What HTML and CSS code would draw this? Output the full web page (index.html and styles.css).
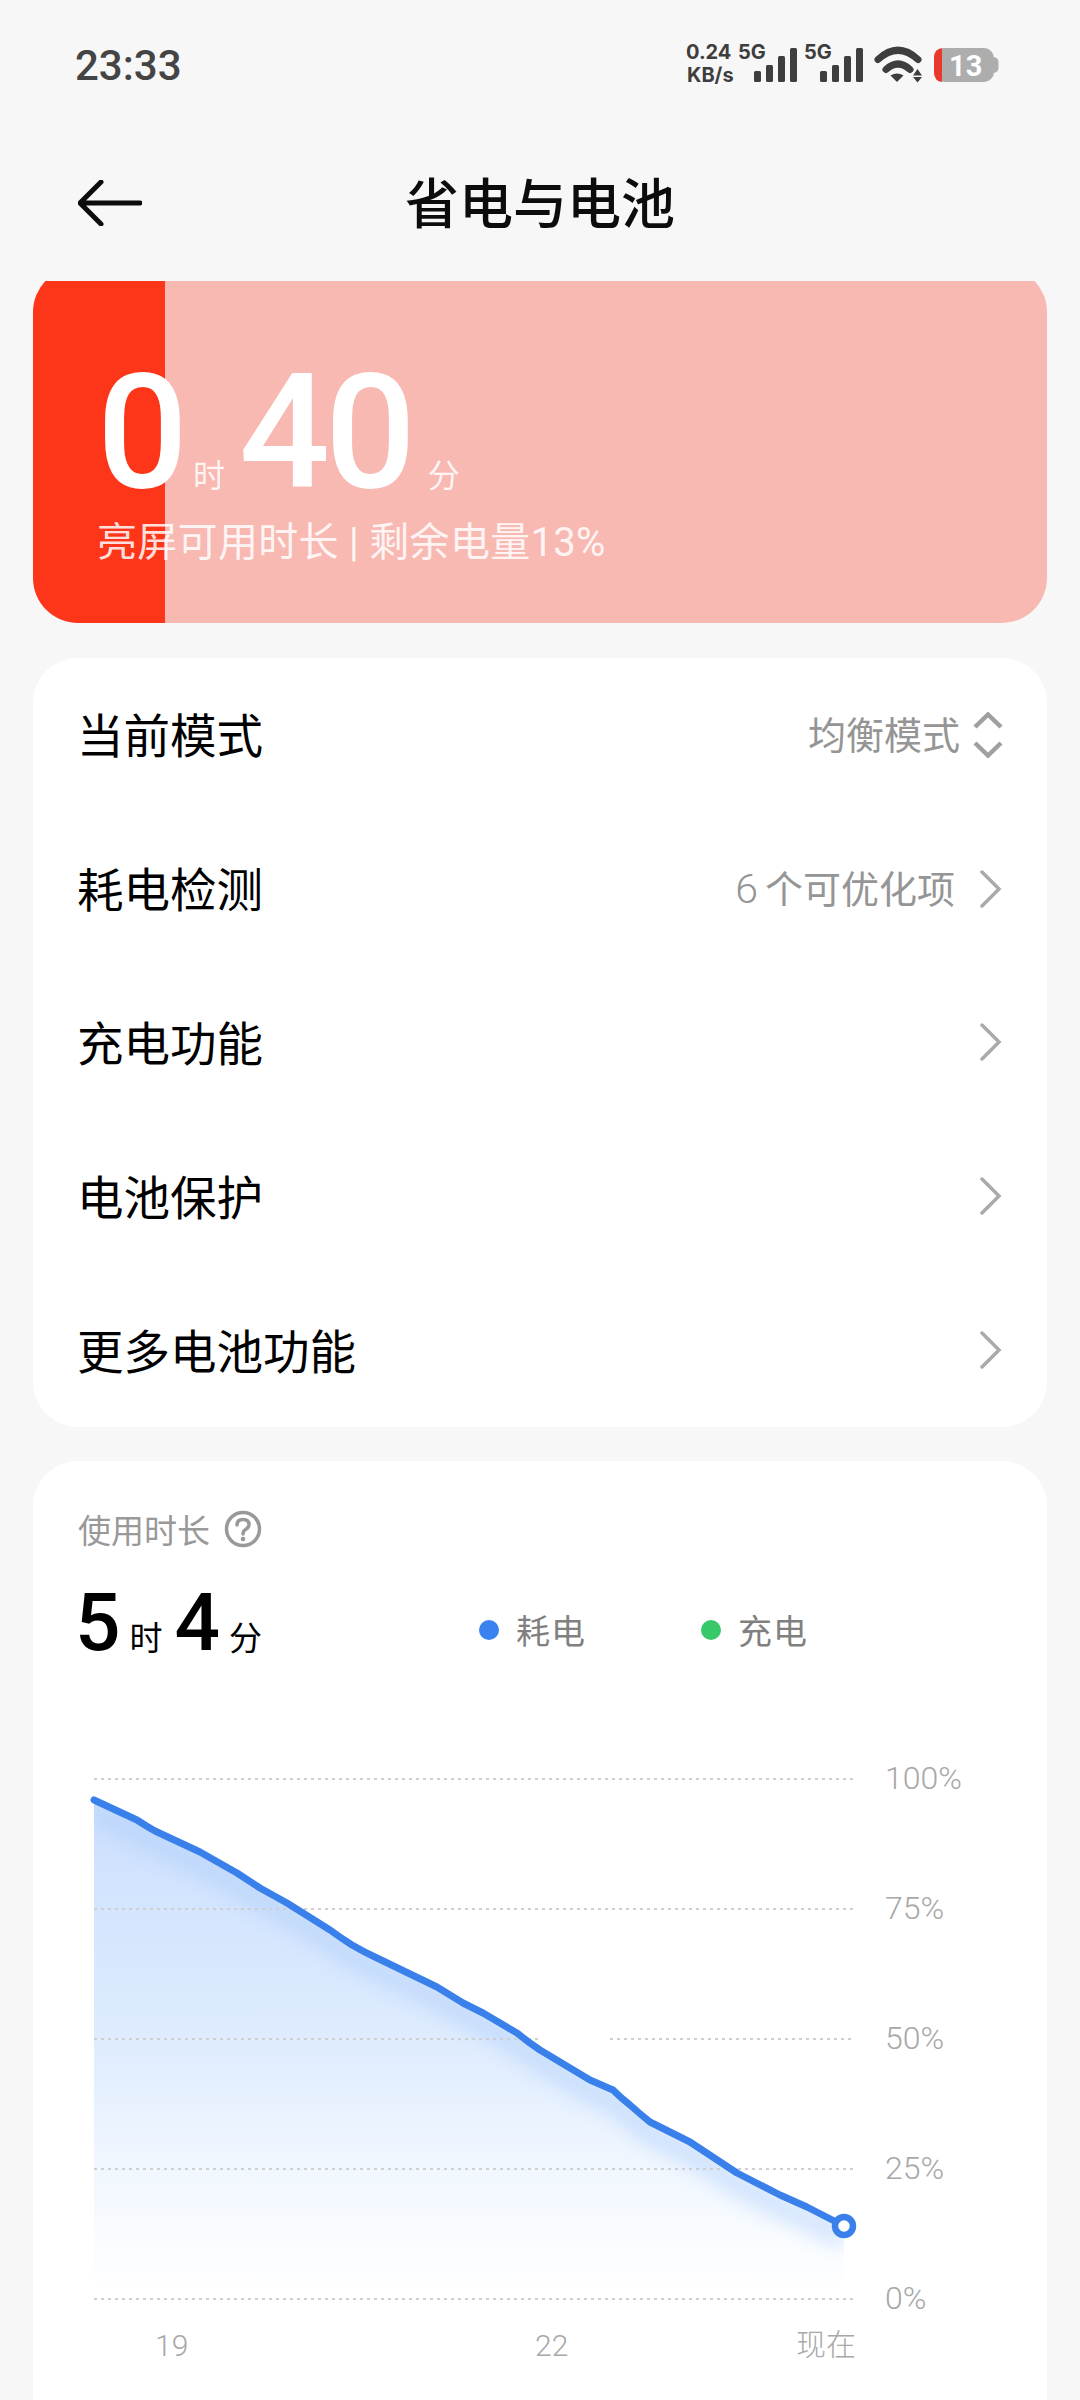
FILE: index.html
```html
<!DOCTYPE html>
<html lang="zh-CN">
<head>
<meta charset="utf-8">
<title>省电与电池</title>
<link rel="stylesheet" href="styles.css">
</head>
<body>
<div class="page">
  <header class="status-bar">
    <span class="clock">23:33</span>
    <svg class="status-icons" viewBox="680 40 320 50" width="320" height="50" aria-label="状态">
      <text class="net-speed" x="686" y="59">0.24</text>
      <text class="net-speed" x="687" y="82">KB/s</text>
      <text class="net-type" x="738" y="59">5G</text>
      <g class="ink">
        <rect x="754" y="71" width="7" height="11" rx="1.5"/>
        <rect x="766" y="65" width="7" height="17" rx="1.5"/>
        <rect x="778" y="56" width="7" height="26" rx="1.5"/>
        <rect x="790" y="48" width="7" height="34" rx="1.5"/>
      </g>
      <text class="net-type" x="804" y="59">5G</text>
      <g class="ink">
        <rect x="820" y="71" width="7" height="11" rx="1.5"/>
        <rect x="832" y="65" width="7" height="17" rx="1.5"/>
        <rect x="844" y="56" width="7" height="26" rx="1.5"/>
        <rect x="856" y="48" width="7" height="34" rx="1.5"/>
      </g>
      <path class="wifi-arc" d="M878 59.500Q898 41 918 59.500"/>
      <path class="wifi-arc" d="M886 69.500Q898 58.500 910 69.500"/>
      <path class="ink" d="M890.500 75.500Q897 71.500 903.500 75.500L897 82Z"/>
      <path class="ink" d="M913 75.500L917.500 69L922 75.500ZM913 77L922 77L917.500 82.500Z"/>
      <rect class="batt-body" x="934" y="48" width="60" height="34" rx="10"/>
      <path class="batt-low" d="M942 48V82H943.500Q934 82 934 72V58Q934 48 943.500 48Z"/>
      <path class="batt-body" d="M994 57Q998.500 58 998.500 62V68Q998.500 72 994 73Z"/>
      <text class="batt-text" x="949" y="76">13</text>
    </svg>
  </header>

  <nav class="nav-bar">
    <svg class="back-icon" viewBox="0 0 64 46" width="64" height="46" aria-hidden="true">
      <path d="M23 2L2 23L23 44M3 23H62"/>
    </svg>
    <h1 class="nav-title">省电与电池</h1>
  </nav>

  <div class="hero-clip">
    <section class="hero">
      <div class="hero-time">
        <span class="hero-num">0</span><span class="hero-unit unit-hour">时</span>
        <span class="hero-num">40</span><span class="hero-unit unit-min">分</span>
      </div>
      <p class="hero-caption">亮屏可用时长 | 剩余电量13%</p>
    </section>
  </div>

  <section class="card menu">
    <div class="menu-row">
      <span class="menu-label">当前模式</span>
      <span class="menu-value">均衡模式</span>
      <svg class="updown" viewBox="0 0 30 46" width="30" height="46" aria-hidden="true">
        <path d="M2 15L15 2.500L28 15M2 31L15 43.500L28 31"/>
      </svg>
    </div>
    <div class="menu-row">
      <span class="menu-label">耗电检测</span>
      <span class="menu-value"><span class="menu-digit">6</span>个可优化项</span>
      <svg class="chevron" viewBox="0 0 22 38" width="22" height="38" aria-hidden="true">
        <path d="M2 2L19 19L2 36"/>
      </svg>
    </div>
    <div class="menu-row">
      <span class="menu-label">充电功能</span>
      <svg class="chevron" viewBox="0 0 22 38" width="22" height="38" aria-hidden="true">
        <path d="M2 2L19 19L2 36"/>
      </svg>
    </div>
    <div class="menu-row">
      <span class="menu-label">电池保护</span>
      <svg class="chevron" viewBox="0 0 22 38" width="22" height="38" aria-hidden="true">
        <path d="M2 2L19 19L2 36"/>
      </svg>
    </div>
    <div class="menu-row">
      <span class="menu-label">更多电池功能</span>
      <svg class="chevron" viewBox="0 0 22 38" width="22" height="38" aria-hidden="true">
        <path d="M2 2L19 19L2 36"/>
      </svg>
    </div>
  </section>

  <section class="card usage">
    <div class="usage-head">
      <div class="usage-title">
        <span>使用时长</span>
        <svg class="help-icon" viewBox="0 0 38 38" width="38" height="38" aria-hidden="true">
          <circle cx="19" cy="19" r="16.500"/>
          <path d="M13 15Q13 9.500 19 9.500Q25 9.500 25 14.500Q25 17.500 21.500 19.500Q19 21 19 24"/>
          <circle class="help-dot" cx="19" cy="29" r="2.300"/>
        </svg>
      </div>
      <div class="usage-summary">
        <div class="duration">
          <span class="duration-num">5</span><span class="duration-unit">时</span>
          <span class="duration-num">4</span><span class="duration-unit">分</span>
        </div>
        <div class="legend">
          <span class="legend-item"><i class="dot dot-blue"></i>耗电</span>
          <span class="legend-item"><i class="dot dot-green"></i>充电</span>
        </div>
      </div>
    </div>

    <svg class="chart" viewBox="33 1740 1014 660" width="1014" height="660">
      <defs>
        <linearGradient id="areaFill" gradientUnits="userSpaceOnUse" x1="0" y1="1800" x2="0" y2="2292">
          <stop offset="0" stop-color="#cbdffd"/>
          <stop offset="0.5" stop-color="#dfecfe"/>
          <stop offset="0.75" stop-color="#f1f7ff"/>
          <stop offset="1" stop-color="#ffffff"/>
        </linearGradient>
        <clipPath id="areaClip">
          <path d="M94 1800L137 1820L155 1831L200 1852L237 1873L260 1888L287 1903L330 1930L352 1945L377 1958L437 1987L463 2003L483 2013L517 2033L540 2050L590 2080L613 2090L630 2105L650 2122L690 2142L737 2173L780 2195L807 2207L844 2226V2300H94Z"/>
        </clipPath>
        <filter id="soften" x="-10%" y="-10%" width="120%" height="120%">
          <feGaussianBlur stdDeviation="9"/>
        </filter>
      </defs>

      <g clip-path="url(#areaClip)">
        <rect x="94" y="1780" width="750" height="520" fill="url(#areaFill)"/>
        <path class="line-glow" filter="url(#soften)" d="M94 1812L137 1832L155 1843L200 1864L237 1885L260 1900L287 1915L330 1942L352 1957L377 1970L437 1999L463 2015L483 2025L517 2045L540 2062L590 2092L613 2102L630 2117L650 2134L690 2154L737 2185L780 2207L807 2219L844 2238"/>
      </g>

      <g class="grid">
        <path d="M94 1779H853"/>
        <path d="M94 1909H853"/>
        <path d="M94 2039H540M610 2039H853"/>
        <path d="M94 2169H853"/>
        <path d="M94 2299H853"/>
      </g>

      <path class="line" d="M94 1800L137 1820Q146 1826 155 1831L200 1852L237 1873L260 1888L287 1903L330 1930Q341 1938 352 1945Q364 1952 377 1958L437 1987L463 2003L483 2013L517 2033Q528 2042 540 2050L590 2080L613 2090Q621 2098 630 2105Q640 2114 650 2122L690 2142L737 2173L780 2195L807 2207L844 2226"/>
      <circle class="line-end" cx="844" cy="2226" r="9"/>

      <g class="axis-y">
        <text x="885" y="1789">100%</text>
        <text x="885" y="1919">75%</text>
        <text x="885" y="2049">50%</text>
        <text x="885" y="2179">25%</text>
        <text x="885" y="2309">0%</text>
      </g>
      <g class="axis-x">
        <text x="155" y="2356">19</text>
        <text x="535" y="2356">22</text>
        <text x="796" y="2355">现在</text>
      </g>
    </svg>
  </section>
</div>
</body>
</html>
```

FILE: styles.css
```css
* {
  box-sizing: border-box;
}

html,
body {
  margin: 0;
  padding: 0;
}

body {
  background: #f7f7f7;
  font-family: Roboto, "Noto Sans CJK SC", sans-serif;
  color: #0c0c0c;
}

.page {
  width: 1080px;
  height: 2400px;
  overflow: hidden;
}

/* Status bar */
.status-bar {
  height: 130px;
  display: flex;
  align-items: center;
  justify-content: space-between;
  padding: 0 80px 0 75px;
}

.clock {
  font-size: 42px;
  font-weight: 500;
  color: #444;
}

.status-icons {
  display: block;
}

.ink {
  fill: #3e3e3e;
}

.net-speed,
.net-type {
  font-family: Inter, Roboto, sans-serif;
  font-size: 20px;
  font-weight: 700;
  fill: #3e3e3e;
}

.wifi-arc {
  fill: none;
  stroke: #3e3e3e;
  stroke-width: 7;
  stroke-linecap: round;
}

.batt-body {
  fill: #adadad;
}

.batt-low {
  fill: #e8392c;
}

.batt-text {
  font-size: 29px;
  font-weight: 700;
  fill: #fff;
}

/* Navigation */
.nav-bar {
  height: 146px;
  margin-bottom: 5px;
  padding-left: 78px;
  display: flex;
  align-items: center;
  position: relative;
}

.back-icon path {
  fill: none;
  stroke: #0c0c0c;
  stroke-width: 5;
  stroke-linecap: round;
  stroke-linejoin: miter;
}

.nav-title {
  position: absolute;
  left: 0;
  right: 0;
  margin: 6px 0 0;
  text-align: center;
  font-size: 54px;
  font-weight: 500;
  line-height: 70px;
}

/* Remaining-time banner, scrolled slightly under the nav bar */
.hero-clip {
  margin: 0 33px;
  height: 342px;
  overflow: hidden;
}

.hero {
  margin-top: -14px;
  height: 356px;
  border-radius: 45px;
  background: linear-gradient(to right, #fd3519 132px, #f9b9b3 132px);
  padding: 101px 0 0 64px;
  color: #fff;
}

.hero-time {
  display: flex;
  align-items: baseline;
  height: 130px;
  line-height: 130px;
}

.hero-num {
  font-size: 160px;
  font-weight: 500;
  line-height: 130px;
  letter-spacing: -5px;
}

.hero-unit {
  font-size: 32px;
  font-weight: 400;
  opacity: 0.85;
}

.unit-hour {
  margin: 0 14px 0 10px;
}

.unit-min {
  margin-left: 17px;
}

.hero-caption {
  margin: 19px 0 0;
  font-size: 40px;
  line-height: 52px;
  letter-spacing: 0.3px;
  color: rgba(255, 255, 255, 0.86);
}

/* Cards */
.card {
  margin: 35px 33px 0;
  background: #fff;
  border-radius: 45px;
}

.menu-row {
  height: 153.800px;
  padding: 0 45px 0 44px;
  display: flex;
  align-items: center;
}

.menu-label {
  font-size: 46.500px;
  font-weight: 400;
  margin: -4px auto 0 0;
  color: #000;
}

.menu-value {
  font-size: 38px;
  margin-top: -4px;
  color: #959595;
}

.menu-digit {
  font-size: 41px;
  font-weight: 300;
  letter-spacing: 7px;
}

.updown {
  margin: 0 -1px 0 13px;
}

.updown path {
  fill: none;
  stroke: #a0a0a0;
  stroke-width: 4.500;
}

.chevron {
  margin: 0 0 0 25px;
}

.chevron path {
  fill: none;
  stroke: #aaa;
  stroke-width: 3.500;
  stroke-linecap: round;
}

/* Usage card */
.usage {
  margin-top: 34px;
  height: 1000px;
  overflow: hidden;
}

.usage-head {
  padding: 50px 45px 0;
  height: 279px;
}

.usage-title {
  display: flex;
  align-items: center;
  gap: 14px;
  height: 36px;
  font-size: 33px;
  color: #999;
}

.help-icon circle {
  fill: none;
  stroke: #999;
  stroke-width: 3.500;
}

.help-icon path {
  fill: none;
  stroke: #999;
  stroke-width: 3.500;
  stroke-linecap: round;
}

.help-icon .help-dot {
  fill: #999;
  stroke: none;
}

.usage-summary {
  margin-top: 31px;
  display: flex;
  align-items: center;
}

.duration {
  width: 401px;
  margin-left: -3px;
  flex: none;
  display: flex;
  align-items: baseline;
  line-height: 90px;
}

.duration-num {
  font-size: 80px;
  font-weight: 500;
  color: #000;
}

.duration-unit {
  font-size: 33px;
  color: #000;
  margin: 0 12px 0 9px;
}

.legend {
  display: flex;
  gap: 115px;
  margin: 0 0 2px 3px;
}

.legend-item {
  display: flex;
  align-items: center;
  gap: 17px;
  font-size: 34px;
  letter-spacing: 1px;
  color: #808080;
}

.dot {
  width: 20px;
  height: 20px;
  border-radius: 50%;
}

.dot-blue {
  background: #3a82f0;
}

.dot-green {
  background: #37c86a;
}

/* Battery chart */
.chart {
  display: block;
}

.grid path {
  fill: none;
  stroke: #cfcfcf;
  stroke-width: 2;
  stroke-dasharray: 3 4;
}

.line-glow {
  fill: none;
  stroke: #a9cbfa;
  stroke-width: 22;
  opacity: 0.45;
}

.line {
  fill: none;
  stroke: #3a80ea;
  stroke-width: 7;
  stroke-linecap: round;
  stroke-linejoin: round;
}

.line-end {
  fill: #fff;
  stroke: #3a80ea;
  stroke-width: 6.500;
}

.axis-y text,
.axis-x text {
  font-size: 32px;
  font-weight: 300;
  fill: #a8a8a8;
}

.axis-x text {
  font-size: 30px;
}
```
